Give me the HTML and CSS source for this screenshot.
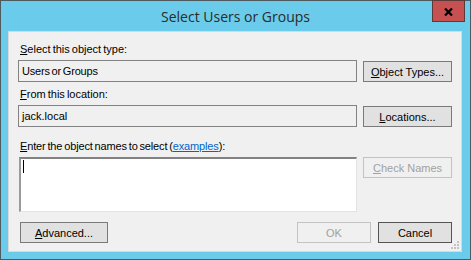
FILE: index.html
```html
<!DOCTYPE html>
<html>
<head>
<meta charset="utf-8">
<link rel="stylesheet" href="styles.css">
</head>
<body>
<div class="window">
  <div class="titlebar">
    <div class="title">Select Users or Groups</div>
    <div class="close">
      <svg width="9" height="8" viewBox="0 0 9 8"><path d="M1 0.5 L8 7.5 M8 0.5 L1 7.5" stroke="#000" stroke-width="2.2" fill="none"/></svg>
    </div>
  </div>
  <div class="client">
    <div class="label l1"><u>S</u>elect this object type:</div>
    <div class="row r1">
      <div class="field tight">Users or Groups</div>
      <div class="btn side"><u>O</u>bject Types...</div>
    </div>
    <div class="label l2"><u>F</u>rom this location:</div>
    <div class="row r2">
      <div class="field">jack.local</div>
      <div class="btn side"><u>L</u>ocations...</div>
    </div>
    <div class="label l3"><u>E</u>nter the object names to select (<span class="link">examples</span>):</div>
    <div class="row r3">
      <div class="area"><span class="caret"></span></div>
      <div class="btn side disabled check"><u>C</u>heck Names</div>
    </div>
    <div class="footer">
      <div class="btn adv"><u>A</u>dvanced...</div>
      <div class="spacer"></div>
      <div class="btn small disabled">OK</div>
      <div class="btn small cancel">Cancel</div>
    </div>
    <svg class="grip" width="9" height="9" viewBox="0 0 9 9">
      <rect x="6" y="0" width="2" height="2" fill="#c4c4c4"/>
      <rect x="3" y="3" width="2" height="2" fill="#c4c4c4"/>
      <rect x="6" y="3" width="2" height="2" fill="#c4c4c4"/>
      <rect x="0" y="6" width="2" height="2" fill="#c4c4c4"/>
      <rect x="3" y="6" width="2" height="2" fill="#c4c4c4"/>
      <rect x="6" y="6" width="2" height="2" fill="#c4c4c4"/>
    </svg>
  </div>
</div>
</body>
</html>
```

FILE: styles.css
```css
* { box-sizing: border-box; }
html, body { margin: 0; padding: 0; }
body {
  width: 471px;
  height: 260px;
  overflow: hidden;
  font-family: "Liberation Sans", Arial, sans-serif;
  font-size: 11px;
  color: #000;
}
.window {
  position: relative;
  width: 471px;
  height: 260px;
  background: #6acbea;
  border: 1px solid #4f5a5f;
  padding: 0 8px 7px 7px;
  display: flex;
  flex-direction: column;
}
.titlebar {
  height: 30px;
  display: flex;
  align-items: center;
  justify-content: center;
}
.title {
  font-family: "Open Sans", "Noto Sans", sans-serif;
  font-size: 14px;
  color: #2b2b2b;
  margin-top: 1px;
  margin-left: 1px;
}
.close {
  position: absolute;
  top: -1px;
  right: 5px;
  width: 33px;
  height: 22px;
  background: #c75050;
  border: 1px solid #5c3a3a;
  display: flex;
  align-items: center;
  justify-content: center;
  padding-top: 1px;
}
.close svg { display: block; }
.client {
  position: relative;
  flex: 1;
  background: #f0f0f0;
  border: 1px solid #d9d9d9;
  padding: 11px 9px 0 9px;
  display: flex;
  flex-direction: column;
}
.label {
  height: 13px;
  line-height: 13px;
  padding-left: 2px;
  white-space: nowrap;
  word-spacing: -1px;
}
.l2 { margin-top: 6px; }
.l3 {
  margin-top: 13px;
  letter-spacing: -0.15px;
}
.row {
  margin-top: 4px;
  display: flex;
  gap: 6px;
  align-items: flex-start;
}
.field {
  width: 339px;
  height: 22px;
  border: 1px solid #838383;
  background: #f0f0f0;
  line-height: 20px;
  padding-left: 3px;
}
.tight {
  letter-spacing: -0.2px;
  word-spacing: -1px;
}
.btn {
  height: 21px;
  border: 1px solid #7a7a7a;
  background: #e1e1e1;
  display: flex;
  align-items: center;
  justify-content: center;
  white-space: nowrap;
}
.side {
  width: 89px;
  margin-top: 1px;
}
.disabled {
  background: #f0f0f0;
  border-color: #c3c3c3;
  color: #a0a0a0;
}
.check {
  margin-top: 0;
  height: 21px;
}
.area {
  position: relative;
  width: 338px;
  height: 55px;
  margin-left: 1px;
  background: #fff;
  border-top: 2px solid #828282;
  border-left: 2px solid #9a9a9a;
  border-right: 1px solid #e3e3e3;
  border-bottom: 1px solid #e3e3e3;
}
.caret {
  position: absolute;
  left: 2px;
  top: 1px;
  width: 1px;
  height: 13px;
  background: #000;
}
.link {
  color: #0066cc;
  text-decoration: underline;
}
.footer {
  margin-top: 10px;
  display: flex;
  gap: 7px;
}
.adv {
  width: 88px;
  margin-left: 2px;
}
.spacer { flex: 1; }
.small { width: 74px; }
.cancel { border-color: #555; }
.grip {
  position: absolute;
  right: 1px;
  bottom: 1px;
}
```
